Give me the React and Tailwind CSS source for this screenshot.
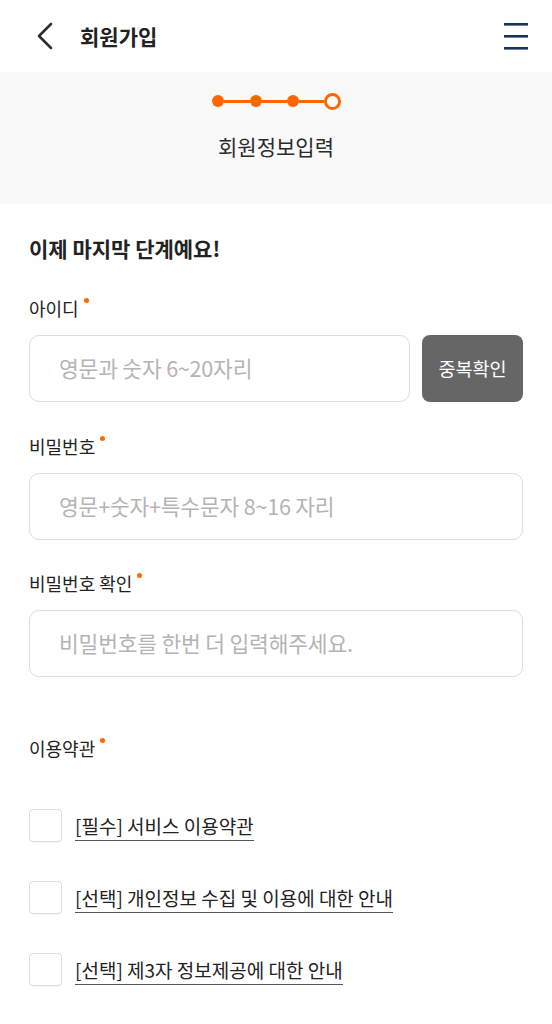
import React from 'react';

const FONT = { fontFamily: '"Noto Sans CJK KR", "Noto Sans", sans-serif' };

function Label({ children, className = '' }) {
  return (
    <div className={`flex items-start h-6 text-[18px] leading-6 text-[#222] ${className}`}>
      <span>{children}</span>
      <span className="ml-[5px] mt-[2px] w-[5px] h-[5px] rounded-full bg-[#ff6a00]" />
    </div>
  );
}

function Field({ placeholder, className = '' }) {
  return (
    <div className={`h-[67px] flex-1 flex items-center rounded-[10px] border border-[#dedede] bg-white pl-[29px] ${className}`}>
      <span className="text-[21.5px] text-[#b4b4b4] tracking-[-0.2px]">{placeholder}</span>
    </div>
  );
}

function Term({ text }) {
  return (
    <div className="flex items-center h-[34px]">
      <div className="w-[33px] h-[33px] rounded-[4px] border border-[#dcdcdc] bg-white shadow-[0_1px_1px_rgba(0,0,0,0.04)]" />
      <span className="ml-[13px] text-[19px] leading-[24px] text-[#222] border-b-[1.5px] border-[#555] pb-[2px] mt-[4px]">
        {text}
      </span>
    </div>
  );
}

export default function App() {
  return (
    <div className="w-[552px] min-h-[1024px] bg-white" style={FONT}>
      {/* Header */}
      <header className="h-[72px] flex items-center justify-between pl-[36px] pr-[24px]">
        <div className="flex items-center">
          <svg width="18" height="28" viewBox="0 0 18 28" fill="none">
            <path d="M15 2 L3 14 L15 26" stroke="#2e2e2e" strokeWidth="2.6" strokeLinecap="round" strokeLinejoin="round" />
          </svg>
          <h1 className="ml-[26px] text-[21px] font-bold text-[#222] leading-none">회원가입</h1>
        </div>
        <svg width="24" height="27" viewBox="0 0 24 27" fill="none">
          <rect x="0" y="0" width="24" height="2.6" fill="#1b3354" />
          <rect x="0" y="12" width="24" height="2.6" fill="#1b3354" />
          <rect x="0" y="24" width="24" height="2.6" fill="#1b3354" />
        </svg>
      </header>

      {/* Step band */}
      <section className="h-[132px] bg-[#f9f9fa] flex flex-col items-center pt-[21px]">
        <div className="flex items-center h-[16px] ml-[1px]">
          <span className="w-[12px] h-[12px] rounded-full bg-[#ff6600]" />
          <span className="w-[26px] h-[3px] bg-[#ff6600]" />
          <span className="w-[12px] h-[12px] rounded-full bg-[#ff6600]" />
          <span className="w-[25px] h-[3px] bg-[#ff6600]" />
          <span className="w-[12px] h-[12px] rounded-full bg-[#ff6600]" />
          <span className="w-[25px] h-[3px] bg-[#ff6600]" />
          <span className="w-[17px] h-[17px] rounded-full border-[3.5px] border-[#ff6600] bg-white" />
        </div>
        <p className="mt-[25px] text-[21px] leading-[24px] text-[#2b2b2b]">회원정보입력</p>
      </section>

      {/* Form */}
      <main className="px-[29px]">
        <h2 className="mt-[30px] h-[28px] text-[21px] leading-[28px] font-bold text-[#222]">이제 마지막 단계예요!</h2>

        <Label className="mt-[34px]">아이디</Label>
        <div className="mt-[15px] flex gap-[12px]">
          <Field placeholder="영문과 숫자 6~20자리" />
          <button className="w-[101px] h-[67px] rounded-[8px] bg-[#666666] text-white text-[18.5px]">중복확인</button>
        </div>

        <Label className="mt-[32px]">비밀번호</Label>
        <div className="mt-[15px] flex">
          <Field placeholder="영문+숫자+특수문자 8~16 자리" />
        </div>

        <Label className="mt-[31px]">비밀번호 확인</Label>
        <div className="mt-[15px] flex">
          <Field placeholder="비밀번호를 한번 더 입력해주세요." />
        </div>

        <Label className="mt-[59px]">이용약관</Label>

        <div className="mt-[48px] flex flex-col gap-[38px]">
          <Term text="[필수] 서비스 이용약관" />
          <Term text="[선택] 개인정보 수집 및 이용에 대한 안내" />
          <Term text="[선택] 제3자 정보제공에 대한 안내" />
        </div>
      </main>
    </div>
  );
}
